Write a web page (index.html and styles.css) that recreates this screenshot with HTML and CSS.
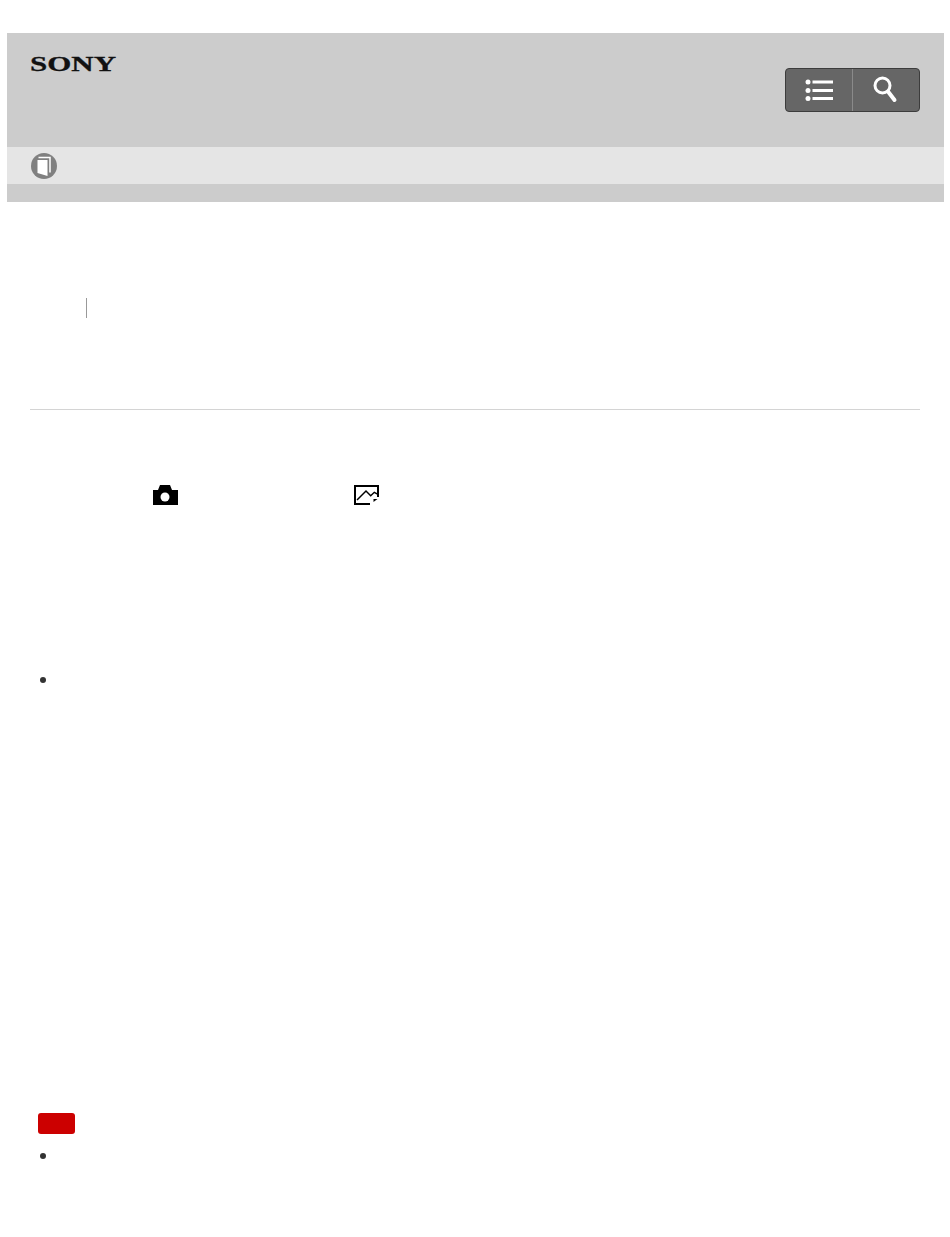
FILE: index.html
```html
<!DOCTYPE html>
<html lang="en">
<head>
    <meta charset="UTF-8">
    <meta name="viewport" content="width=device-width, initial-scale=1.0">
    <title>Help Guide</title>
    <link rel="stylesheet" href="styles.css">
</head>
<body>

    <header class="site-header">
        <div class="top-bar">
            <svg class="logo" width="100" height="30" viewBox="0 0 100 30">
                <text x="0" y="21.500" textLength="86" lengthAdjust="spacingAndGlyphs">SONY</text>
            </svg>
            <div class="tool-buttons">
                <button class="tool-button" type="button" aria-label="Contents">
                    <svg width="30" height="24" viewBox="0 0 30 24">
                        <circle cx="4" cy="5" r="2.500" fill="#fff"/>
                        <circle cx="4" cy="13.500" r="2.500" fill="#fff"/>
                        <circle cx="4" cy="21.500" r="2.500" fill="#fff"/>
                        <path d="M8.500 5H29M8.500 13.500H29M8.500 21.500H29" stroke="#fff" stroke-width="3"/>
                    </svg>
                </button>
                <button class="tool-button" type="button" aria-label="Search">
                    <svg width="26" height="28" viewBox="0 0 26 28">
                        <circle cx="9.500" cy="10.500" r="7.500" fill="none" stroke="#fff" stroke-width="3"/>
                        <path d="M15 16.500l6.500 8.500" stroke="#fff" stroke-width="4" stroke-linecap="round"/>
                    </svg>
                </button>
            </div>
        </div>
        <div class="title-band">
            <svg class="book-icon" width="26" height="26" viewBox="0 0 26 26">
                <circle cx="13" cy="13" r="13" fill="#808080"/>
                <path d="M7.500 4.500h11.500v15" fill="none" stroke="#fff" stroke-width="1.500"/>
                <path d="M6.500 7h10v16l-10-3z" fill="#fff"/>
            </svg>
        </div>
        <div class="bottom-bar"></div>
    </header>

    <main class="content">
        <div class="breadcrumb"><span class="crumb-line"></span></div>
        <hr class="rule">

        <p class="step">
            <svg class="inline-icon first-icon" width="25" height="20" viewBox="0 0 25 20">
                <path d="M0 5h5l2-5h10l2 5h6v15H0z" fill="#000"/>
                <circle cx="12" cy="12" r="4.500" fill="#fff"/>
            </svg>
            <svg class="inline-icon second-icon" width="25" height="20" viewBox="0 0 25 20">
                <path d="M24 12V1H1v18h15" fill="none" stroke="#000" stroke-width="2"/>
                <path d="M3 15l9-9 4.700 4.700 3.600-3.400 3.700 2" fill="none" stroke="#000" stroke-width="1.500"/>
                <path d="M19.500 14h4l-4 3z" fill="#000"/>
            </svg>
        </p>

        <div class="hint-item"><span class="dot"></span></div>

        <div class="note">
            <span class="note-badge"></span>
            <div class="note-item"><span class="dot"></span></div>
        </div>
    </main>

</body>
</html>
```

FILE: styles.css
```css
body {
    font-family: 'Liberation Sans', Arial, sans-serif;
    background-color: #fff;
    color: #333;
    margin: 0;
    padding: 33px 6px 0 7px;
}
.top-bar {
    background-color: #ccc;
    height: 114px;
    display: flex;
    justify-content: space-between;
    align-items: flex-start;
    padding: 0 24px 0 23px;
    box-sizing: border-box;
}
.logo {
    margin-top: 16px;
}
.logo text {
    font-family: 'Liberation Serif', serif;
    font-weight: bold;
    font-size: 21px;
    fill: #111;
    stroke: #111;
    stroke-width: 0.3px;
}
.tool-buttons {
    display: flex;
    margin-top: 35px;
    border: 1px solid #3c3c3c;
    border-radius: 4px;
    background-color: #666;
    height: 44px;
    box-sizing: border-box;
}
.tool-button {
    display: flex;
    align-items: center;
    justify-content: center;
    background: none;
    border: none;
    padding: 0 0 2px;
    height: 100%;
    width: 66px;
    box-sizing: border-box;
}
.tool-button:first-child {
    width: 67px;
    border-right: 1px solid #8a8a8a;
}
.title-band {
    background-color: #e5e5e5;
    height: 37px;
    display: flex;
    align-items: center;
    padding-left: 24px;
}
.bottom-bar {
    background-color: #ccc;
    height: 18px;
}
.content {
    padding: 96px 24px 0 23px;
}
.breadcrumb {
    padding-left: 56px;
    height: 20px;
}
.crumb-line {
    display: block;
    width: 1px;
    height: 20px;
    background-color: #999;
}
.rule {
    border: none;
    height: 1px;
    background-color: #d4d4d4;
    margin: 91px 0 0;
}
.step {
    display: flex;
    margin: 75px 0 0;
    height: 20px;
}
.first-icon {
    margin-left: 123px;
}
.second-icon {
    margin-left: 176px;
}
.hint-item {
    margin-top: 172px;
    height: 6px;
    padding-left: 9.5px;
}
.dot {
    display: block;
    width: 6px;
    height: 6px;
    border-radius: 50%;
    background-color: #333;
}
.note {
    margin-top: 430px;
}
.note-badge {
    display: block;
    width: 37px;
    height: 21px;
    margin-left: 8px;
    border-radius: 3px;
    background-color: #c00;
}
.note-item {
    margin-top: 19px;
    padding-left: 9.5px;
}
```
